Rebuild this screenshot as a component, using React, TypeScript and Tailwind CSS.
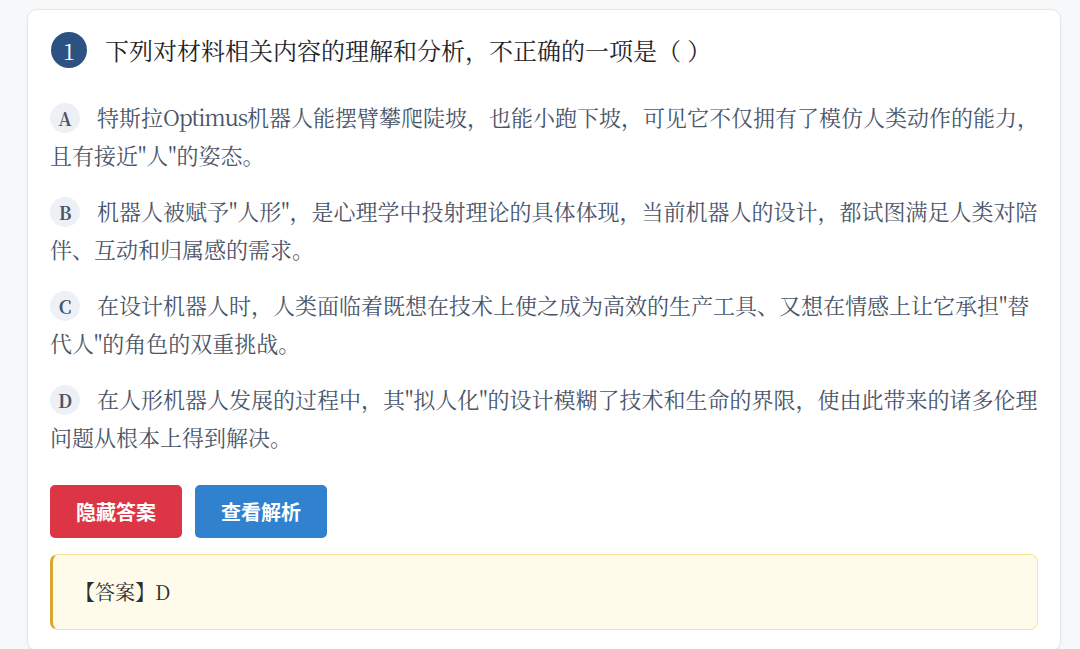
import React from 'react'

const options: { key: string; text: React.ReactNode }[] = [
  {
    key: 'A',
    text: (
      <>
        特斯拉<span className="tracking-[-1.2px]">Optimus</span>
        机器人能摆臂攀爬陡坡，也能小跑下坡，可见它不仅拥有了模仿人类动作的能力，且有接近"人"的姿态。
      </>
    ),
  },
  {
    key: 'B',
    text: '机器人被赋予"人形"，是心理学中投射理论的具体体现，当前机器人的设计，都试图满足人类对陪伴、互动和归属感的需求。',
  },
  {
    key: 'C',
    text: '在设计机器人时，人类面临着既想在技术上使之成为高效的生产工具、又想在情感上让它承担"替代人"的角色的双重挑战。',
  },
  {
    key: 'D',
    text: '在人形机器人发展的过程中，其"拟人化"的设计模糊了技术和生命的界限，使由此带来的诸多伦理问题从根本上得到解决。',
  },
]

const serif = {
  fontFamily:
    '"Noto Serif CJK SC", "Liberation Serif", "Noto Sans CJK SC", serif',
}

export default function App() {
  return (
    <div className="min-h-[649px] bg-[#f7f8fa] pt-[9px] pl-[27px]" style={serif}>
      <div className="w-[1034px] rounded-[10px] border border-[#e2e8f0] bg-white px-[22px] pt-[22px] pb-[20px] shadow-[0_1px_3px_rgba(0,0,0,0.06)]">
        <div className="flex items-center gap-[18px] pl-px">
          <span className="flex h-[36px] w-[36px] shrink-0 items-center justify-center rounded-full bg-[#2c5282] text-[22px] text-white">
            1
          </span>
          <h2 className="text-[24px] leading-[36px] text-[#1f2328]">
            下列对材料相关内容的理解和分析，不正确的一项是（ ）
          </h2>
        </div>

        <div className="mt-[30px] flex flex-col gap-[18px]">
          {options.map((opt) => (
            <p
              key={opt.key}
              className="-mr-[10px] text-[22px] leading-[38px] text-[#4a5568]"
            >
              <span className="mr-[17px] inline-flex h-[30px] w-[30px] -translate-y-[2px] items-center justify-center rounded-full bg-[#edf1f6] align-middle text-[18px] font-bold text-[#4a5568]">
                {opt.key}
              </span>
              {opt.text}
            </p>
          ))}
        </div>

        <div
          className="mt-[29px] flex gap-[13px]"
          style={{ fontFamily: '"Noto Sans CJK SC", sans-serif' }}
        >
          <button className="h-[53px] w-[132px] rounded-[5px] bg-[#dc3545] text-[20px] font-bold text-white">
            隐藏答案
          </button>
          <button className="h-[53px] w-[132px] rounded-[5px] bg-[#3182ce] text-[20px] font-bold text-white">
            查看解析
          </button>
        </div>

        <div className="mt-[16px] rounded-[8px] border border-l-[3px] border-[#f8e49a] border-l-[#d9a634] bg-[#fffbea] py-[18px] pl-[22px] text-[20px] leading-[38px] text-[#2d2d2d]">
          【答案】D
        </div>
      </div>
    </div>
  )
}
